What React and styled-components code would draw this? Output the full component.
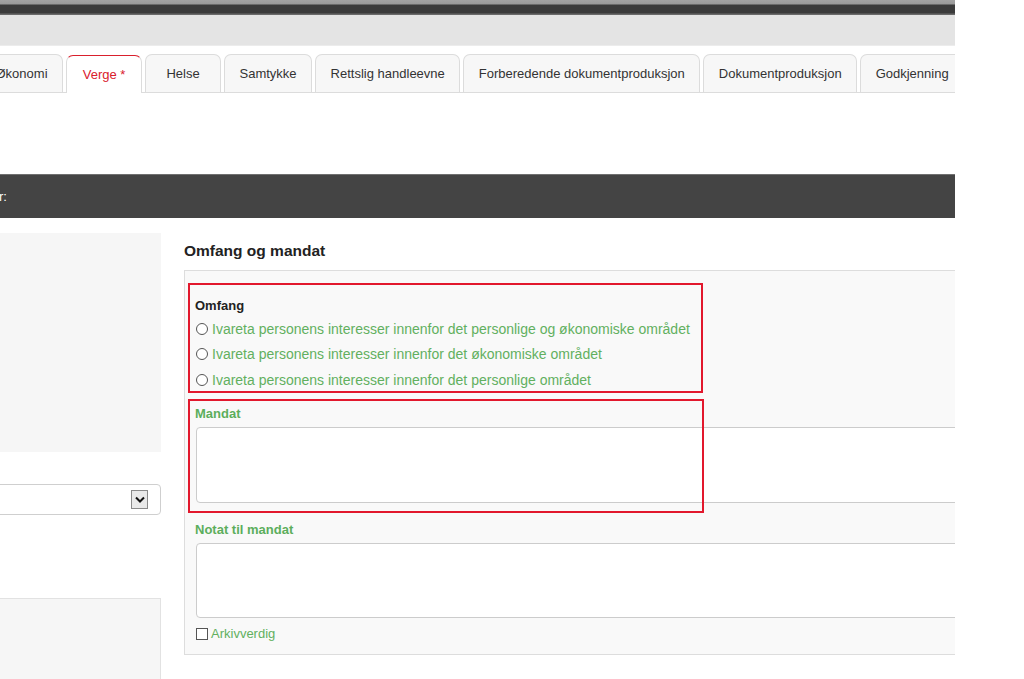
import React from 'react';
import styled, { createGlobalStyle } from 'styled-components';

const GlobalStyle = createGlobalStyle`
  html, body {
    margin: 0;
    padding: 0;
    background: #ffffff;
  }
  body {
    font-family: "Liberation Sans", Arial, sans-serif;
    color: #333333;
  }
`;

const Frame = styled.div`
  width: 955px;
  height: 679px;
  overflow: hidden;
  background: #ffffff;
`;

const TopStrip = styled.div`
  height: 15px;
  background: linear-gradient(to bottom, #a3a3a3 0px, #9a9a9a 4px, #3b3b3b 5px, #3b3b3b 13px, #6a6a6a 14px);
`;

const SubBand = styled.div`
  height: 30px;
  background: #e4e4e4;
  border-bottom: 1px solid #ececec;
`;

const TabRow = styled.div`
  display: flex;
  align-items: flex-end;
  gap: 3px;
  margin-left: -20px;
  padding-top: 8px;
  border-bottom: 1px solid #dcdcdc;
  white-space: nowrap;
`;

const Tab = styled.div`
  flex: 0 0 auto;
  height: 37px;
  min-width: 45px;
  padding: 0 14.5px;
  display: flex;
  align-items: center;
  justify-content: center;
  font-size: 13px;
  border: 1px solid ${(p) => (p.$active ? '#d9202d' : '#dcdcdc')};
  border-bottom: none;
  border-radius: 7px 7px 0 0;
  background: ${(p) => (p.$active ? '#ffffff' : '#f7f7f7')};
  color: ${(p) => (p.$active ? '#d9202d' : '#333333')};
  margin-bottom: ${(p) => (p.$active ? '-1px' : '0')};
  border-left-color: #dcdcdc;
  border-right-color: #dcdcdc;
`;

const DarkBar = styled.div`
  margin-top: 81px;
  height: 43px;
  background: #444444;
  border-top: 1px solid #707070;
  color: #ffffff;
  font-size: 13px;
  display: flex;
  align-items: center;
  margin-left: -1px;
`;

const Columns = styled.div`
  display: grid;
  grid-template-columns: 181px 800px;
  column-gap: 23px;
  margin-left: -20px;
`;

const LeftCol = styled.div`
  display: flex;
  flex-direction: column;
`;

const InfoPanel = styled.div`
  margin-top: ${(p) => p.$top}px;
  height: ${(p) => p.$height}px;
  background: #f6f6f6;
  border: 1px solid ${(p) => (p.$bordered ? '#e2e2e2' : '#f6f6f6')};
  box-sizing: border-box;
`;

const SelectBox = styled.div`
  margin-top: 32px;
  height: 31px;
  box-sizing: border-box;
  border: 1px solid #cfcfcf;
  border-radius: 4px;
  background: #ffffff;
  display: flex;
  align-items: center;
  justify-content: flex-end;
  padding-right: 12px;
`;

const ArrowBox = styled.div`
  width: 17px;
  height: 19px;
  box-sizing: border-box;
  border: 1px solid #8a8a8a;
  background: #e9e9e9;
  display: flex;
  align-items: center;
  justify-content: center;
`;

const RightCol = styled.div`
  display: flex;
  flex-direction: column;
`;

const Heading = styled.h2`
  margin: 25px 0 11px;
  font-size: 15.5px;
  line-height: 16px;
  font-weight: bold;
  color: #222222;
`;

const Panel = styled.div`
  position: relative;
  background: #f9f9f9;
  border: 1px solid #dddddd;
  border-right: none;
  padding: 27px 0 12px 10px;
`;

const GroupLabel = styled.div`
  font-size: 13px;
  line-height: 16px;
  font-weight: bold;
  color: ${(p) => (p.$green ? '#5cae5c' : '#222222')};
  margin-top: ${(p) => p.$top || 0}px;
`;

const RadioList = styled.div`
  display: flex;
  flex-direction: column;
  margin-top: 2px;
`;

const RadioRow = styled.label`
  display: flex;
  align-items: center;
  height: 25.5px;
  font-size: 14px;
  color: #62b05f;
  gap: 4px;
`;

const RadioCircle = styled.span`
  width: 10px;
  height: 10px;
  margin-left: 1px;
  border: 1px solid #555555;
  border-radius: 50%;
  background: #ffffff;
  flex: 0 0 auto;
`;

const TextBox = styled.div`
  margin-top: 5px;
  margin-left: 1px;
  height: ${(p) => p.$height}px;
  box-sizing: border-box;
  border: 1px solid #cccccc;
  border-radius: 4px;
  background: #ffffff;
`;

const CheckRow = styled.label`
  display: flex;
  align-items: center;
  margin-top: 8px;
  margin-left: 1px;
  height: 16px;
  font-size: 13px;
  color: #62b05f;
  gap: 3px;
`;

const CheckSquare = styled.span`
  width: 10px;
  height: 10px;
  border: 1px solid #555555;
  background: #ffffff;
  flex: 0 0 auto;
`;

const Marker = styled.div`
  position: absolute;
  left: 3px;
  top: ${(p) => p.$top}px;
  width: ${(p) => p.$width}px;
  height: ${(p) => p.$height}px;
  box-sizing: border-box;
  border: 2px solid #e2182d;
  pointer-events: none;
`;

const tabs = [
  'Økonomi',
  'Verge *',
  'Helse',
  'Samtykke',
  'Rettslig handleevne',
  'Forberedende dokumentproduksjon',
  'Dokumentproduksjon',
  'Godkjenning',
];

const options = [
  'Ivareta personens interesser innenfor det personlige og økonomiske området',
  'Ivareta personens interesser innenfor det økonomiske området',
  'Ivareta personens interesser innenfor det personlige området',
];

const App = () => {
  return (
    <>
      <GlobalStyle />
      <Frame>
        <TopStrip />
        <SubBand />
        <TabRow>
          {tabs.map((t) => (
            <Tab key={t} $active={t === 'Verge *'}>{t}</Tab>
          ))}
        </TabRow>
        <DarkBar>r:</DarkBar>
        <Columns>
          <LeftCol>
            <InfoPanel $top={15} $height={219} />
            <SelectBox>
              <ArrowBox>
                <svg width="10" height="7" viewBox="0 0 10 7">
                  <path d="M1 1.5 L5 5.5 L9 1.5" fill="none" stroke="#111" strokeWidth="2" />
                </svg>
              </ArrowBox>
            </SelectBox>
            <InfoPanel $top={83} $height={110} $bordered />
          </LeftCol>
          <RightCol>
            <Heading>Omfang og mandat</Heading>
            <Panel>
              <GroupLabel>Omfang</GroupLabel>
              <RadioList>
                {options.map((o) => (
                  <RadioRow key={o}>
                    <RadioCircle />
                    {o}
                  </RadioRow>
                ))}
              </RadioList>
              <GroupLabel $green $top={13}>Mandat</GroupLabel>
              <TextBox $height={76} />
              <GroupLabel $green $top={19}>Notat til mandat</GroupLabel>
              <TextBox $height={75} />
              <CheckRow>
                <CheckSquare />
                Arkivverdig
              </CheckRow>
              <Marker $top={12} $width={515} $height={110} />
              <Marker $top={128} $width={516} $height={114} />
            </Panel>
          </RightCol>
        </Columns>
      </Frame>
    </>
  );
};

export default App;
